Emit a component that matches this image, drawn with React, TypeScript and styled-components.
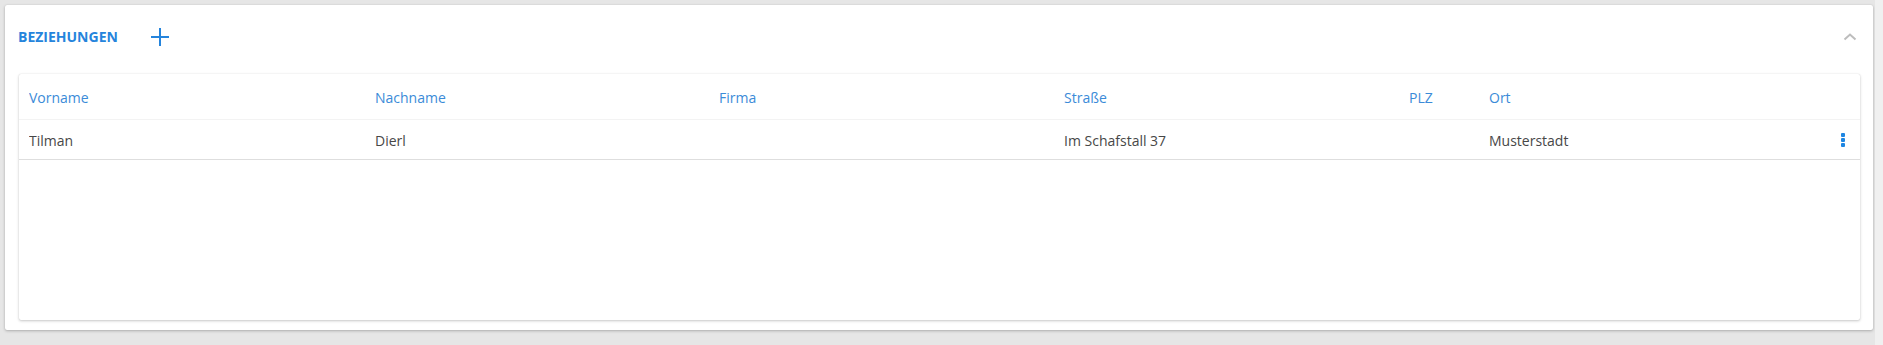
import React from "react";
import styled, { createGlobalStyle } from "styled-components";

const Global = createGlobalStyle`
  html, body { margin: 0; padding: 0; background: #e6e6e6; }
  body { font-family: "Open Sans", "Noto Sans", sans-serif; }
  * { box-sizing: border-box; }
`;

const Page = styled.div`
  display: flex;
  height: 345px;
`;

const Main = styled.div`
  flex: 1;
  padding: 5px 2px 0 5px;
`;

const Track = styled.div`
  width: 8px;
  background: #f0f0f0;
`;

const Card = styled.section`
  background: #fff;
  border-radius: 2px;
  box-shadow: 0 1px 3px rgba(0, 0, 0, 0.25), 0 0 1px rgba(0, 0, 0, 0.15);
  height: 325px;
  padding: 0 13px 10px 14px;
  display: flex;
  flex-direction: column;
`;

const Header = styled.div`
  height: 69px;
  display: flex;
  align-items: center;
  padding-bottom: 6px;
`;

const Title = styled.h2`
  margin: 0 0 0 -1px;
  font-size: 14px;
  font-weight: 700;
  color: #2584dc;
  letter-spacing: 0;
`;

const IconButton = styled.button<{ $ml?: number }>`
  border: 0;
  background: none;
  padding: 0;
  margin-left: ${(p) => p.$ml ?? 0}px;
  display: flex;
  align-items: center;
  justify-content: center;
  cursor: pointer;
`;

const Spacer = styled.div`
  flex: 1;
`;

const TableCard = styled.div`
  flex: 1;
  background: #fff;
  border-radius: 2px;
  box-shadow: 0 1px 3px rgba(0, 0, 0, 0.22), 0 0 1px rgba(0, 0, 0, 0.15);
`;

const Row = styled.div<{ $head?: boolean }>`
  display: grid;
  grid-template-columns: 346px 344px 345px 345px 80px 1fr 34px;
  align-items: center;
  padding: 2px 0 0 10px;
  height: ${(p) => (p.$head ? 46 : 40)}px;
  border-bottom: 1px solid ${(p) => (p.$head ? "#f3f3f3" : "#dedede")};
  font-size: 14px;
  color: ${(p) => (p.$head ? "#3b8bd8" : "#474747")};
`;

const Cell = styled.div`
  white-space: nowrap;
  overflow: hidden;
`;

const Dots = styled.div`
  display: flex;
  flex-direction: column;
  align-items: center;
  gap: 1px;
  margin-top: -2px;
  & > span {
    width: 4px;
    height: 4px;
    border-radius: 1px;
    background: #1e86e2;
  }
`;

const cols = ["Vorname", "Nachname", "Firma", "Straße", "PLZ", "Ort"];
const data = ["Tilman", "Dierl", "", "Im Schafstall 37", "", "Musterstadt"];

export default function App() {
  return (
    <>
      <Global />
      <Page>
        <Main>
          <Card>
            <Header>
              <Title>BEZIEHUNGEN</Title>
              <IconButton $ml={33} aria-label="Hinzufügen">
                <svg width="18" height="18" viewBox="0 0 18 18">
                  <path d="M9 0v18M0 9h18" stroke="#2584dc" strokeWidth="2" />
                </svg>
              </IconButton>
              <Spacer />
              <IconButton aria-label="Einklappen">
                <svg width="14" height="10" viewBox="0 0 14 10">
                  <path d="M1.5 7.5L7 2.5l5.5 5" fill="none" stroke="#bdbdbd" strokeWidth="2" />
                </svg>
              </IconButton>
              <div style={{ width: 3 }} />
            </Header>
            <TableCard>
              <Row $head>
                {cols.map((c) => (
                  <Cell key={c}>{c}</Cell>
                ))}
                <Cell />
              </Row>
              <Row>
                {data.map((d, i) => (
                  <Cell key={i}>{d}</Cell>
                ))}
                <Dots>
                  <span />
                  <span />
                  <span />
                </Dots>
              </Row>
            </TableCard>
          </Card>
        </Main>
        <Track />
      </Page>
    </>
  );
}
